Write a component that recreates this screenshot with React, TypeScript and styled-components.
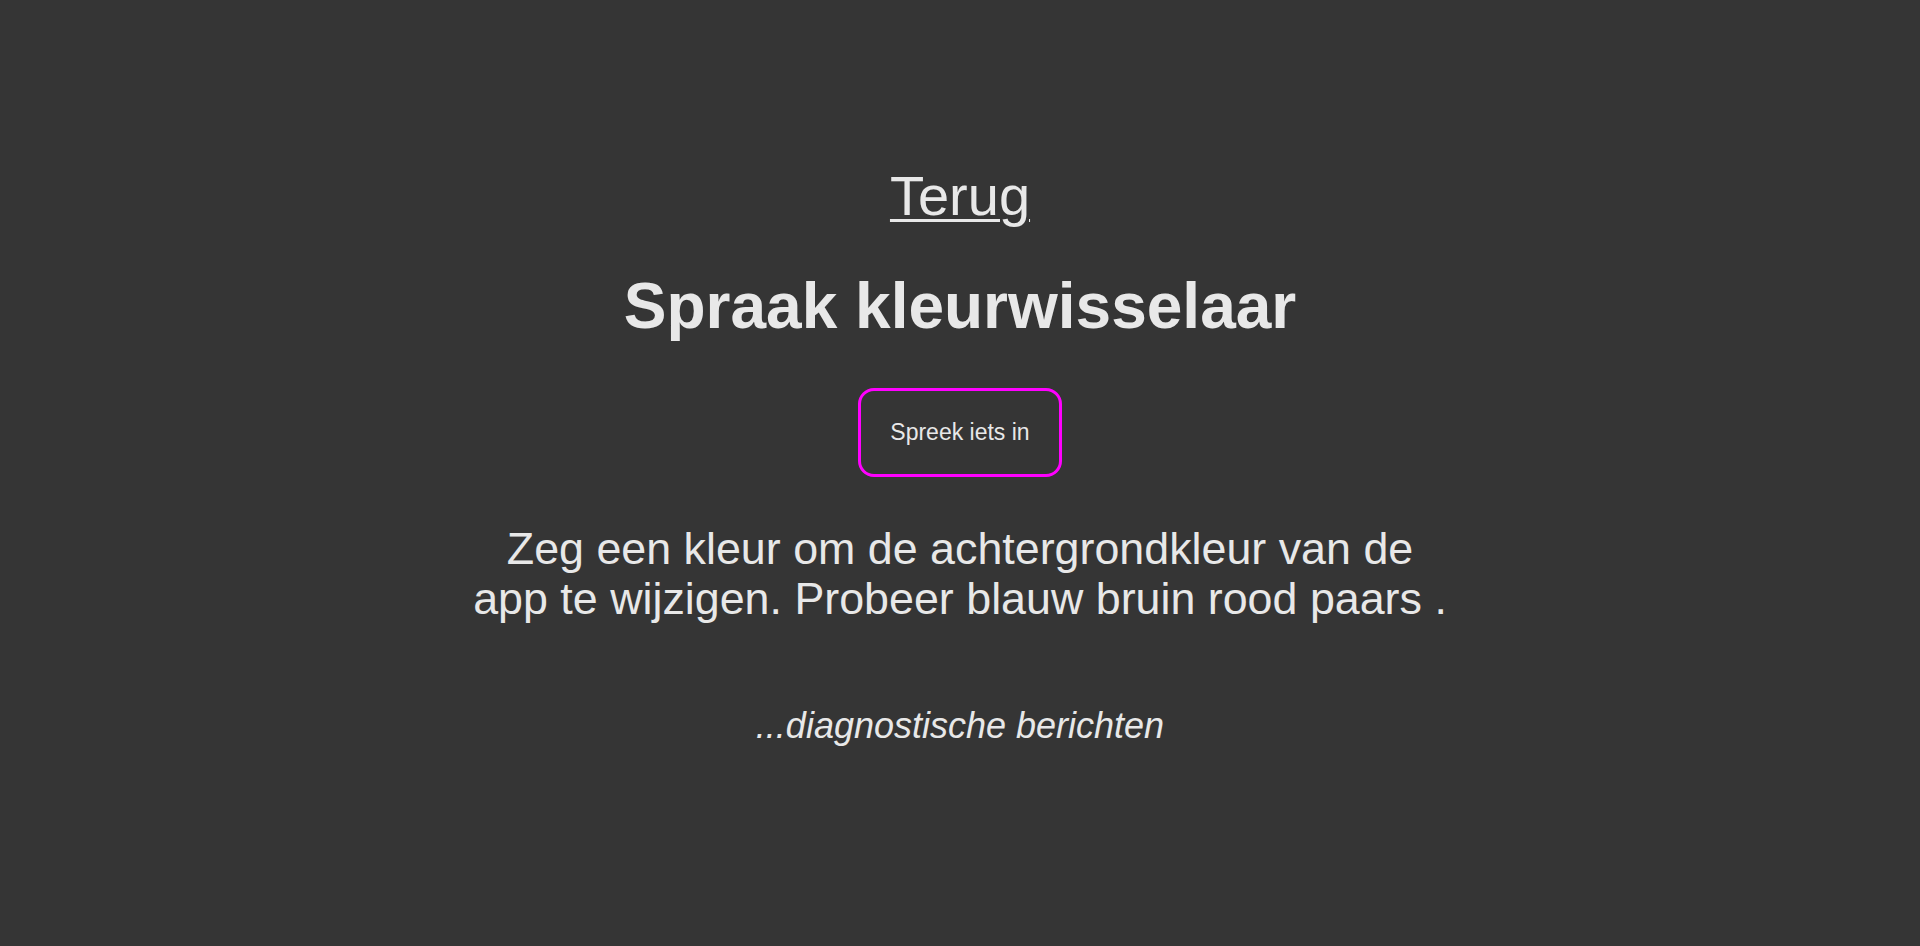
import React from "react";
import styled, { createGlobalStyle } from "styled-components";

const GlobalStyle = createGlobalStyle`
  html, body {
    margin: 0;
    padding: 0;
    background: #353535;
  }
  body {
    font-family: "Liberation Sans", Arial, sans-serif;
    color: #e8e8e8;
  }
`;

const Page = styled.main`
  min-height: 946px;
  box-sizing: border-box;
  display: flex;
  flex-direction: column;
  align-items: center;
  padding-top: 164px;
  text-align: center;
`;

const BackLink = styled.a`
  font-size: 56px;
  line-height: 64px;
  color: #e8e8e8;
  text-decoration: underline;
  text-decoration-thickness: 3px;
  text-underline-offset: 4px;
  cursor: pointer;
`;

const Title = styled.h1`
  margin: 41px 0 0;
  font-size: 64px;
  line-height: 74px;
  font-weight: 700;
`;

const SpeakButton = styled.button`
  margin-top: 45px;
  box-sizing: border-box;
  width: 204px;
  height: 89px;
  border: 3px solid #ff00ff;
  border-radius: 16px;
  background: transparent;
  color: #e8e8e8;
  font-family: "Liberation Sans", Arial, sans-serif;
  font-size: 23px;
  cursor: pointer;
`;

const Instructions = styled.p`
  margin: 46px 0 0;
  max-width: 982px;
  font-size: 44.8px;
  line-height: 50px;
`;

const Diagnostics = styled.p`
  margin: 82px 0 0;
  font-size: 36px;
  line-height: 41px;
  font-style: italic;
`;

export default function App() {
  return (
    <>
      <GlobalStyle />
      <Page>
        <BackLink href="#">Terug</BackLink>
        <Title>Spraak kleurwisselaar</Title>
        <SpeakButton type="button">Spreek iets in</SpeakButton>
        <Instructions>
          Zeg een kleur om de achtergrondkleur van de app te wijzigen. Probeer blauw bruin rood paars .
        </Instructions>
        <Diagnostics>...diagnostische berichten</Diagnostics>
      </Page>
    </>
  );
}
